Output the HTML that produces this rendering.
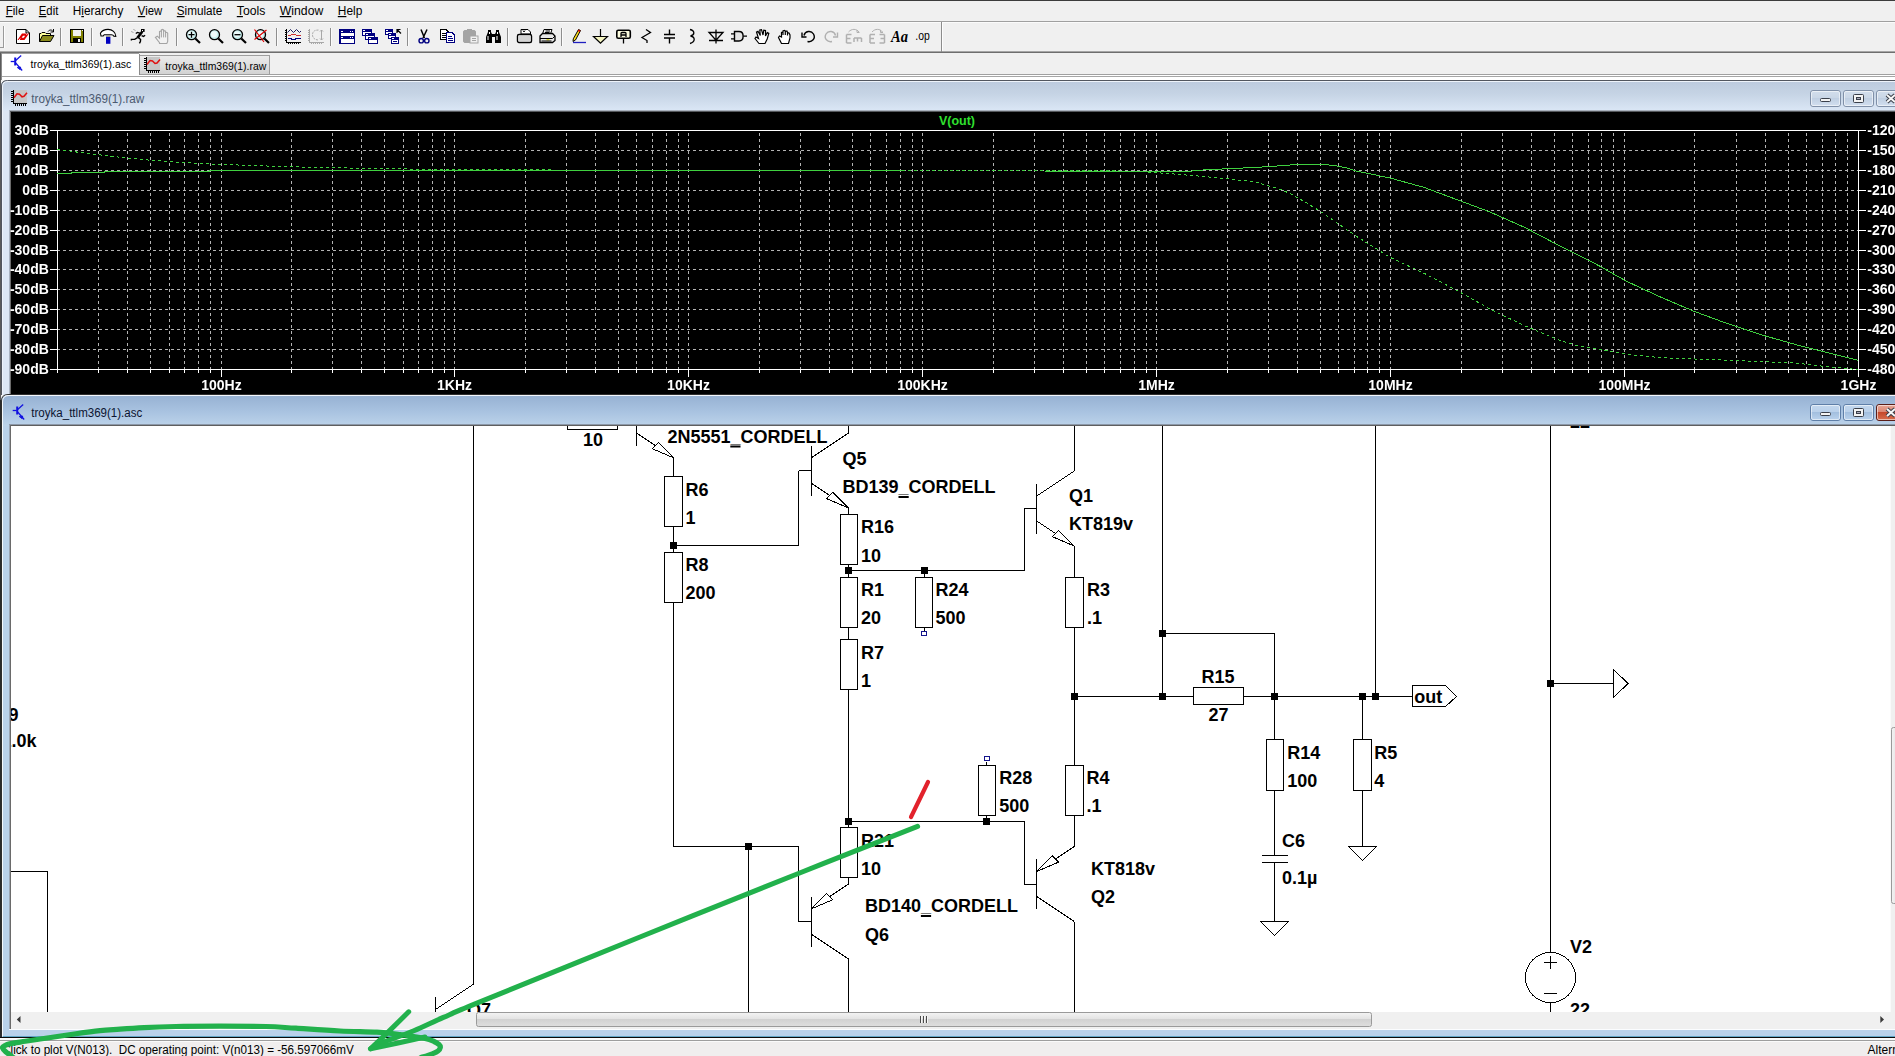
<!DOCTYPE html>
<html lang="en"><head><meta charset="utf-8"><title>LTspice IV - troyka_ttlm369(1).asc</title>
<style>
html,body{margin:0;padding:0;background:#f0f0f0;overflow:hidden}
svg{display:block;font-family:"Liberation Sans", Arial, sans-serif}
text{white-space:pre}
</style></head><body>
<svg width="1895" height="1056" viewBox="0 0 1895 1056">
<defs>
<linearGradient id="gInact" x1="0" y1="0" x2="0" y2="1"><stop offset="0" stop-color="#bccadd"/><stop offset="0.45" stop-color="#c6d4e5"/><stop offset="1" stop-color="#dbe7f6"/></linearGradient>
<linearGradient id="gAct" x1="0" y1="0" x2="0" y2="1"><stop offset="0" stop-color="#97b2d3"/><stop offset="0.5" stop-color="#a8c2e0"/><stop offset="1" stop-color="#bcd3ea"/></linearGradient>
<linearGradient id="gTab" x1="0" y1="0" x2="0" y2="1"><stop offset="0" stop-color="#ececec"/><stop offset="1" stop-color="#d2d2d2"/></linearGradient>
<linearGradient id="gThumb" x1="0" y1="0" x2="0" y2="1"><stop offset="0" stop-color="#f4f4f4"/><stop offset="0.5" stop-color="#e2e2e2"/><stop offset="0.5" stop-color="#d2d2d2"/><stop offset="1" stop-color="#dedede"/></linearGradient>
<linearGradient id="gThumbV" x1="0" y1="0" x2="1" y2="0"><stop offset="0" stop-color="#f4f4f4"/><stop offset="1" stop-color="#dcdcdc"/></linearGradient>
<linearGradient id="gBtnI" x1="0" y1="0" x2="0" y2="1"><stop offset="0" stop-color="#d3deec"/><stop offset="0.5" stop-color="#c9d6e6"/><stop offset="0.5" stop-color="#c0cfe2"/><stop offset="1" stop-color="#d3e0f0"/></linearGradient>
<linearGradient id="gBtnA" x1="0" y1="0" x2="0" y2="1"><stop offset="0" stop-color="#c4d8ef"/><stop offset="0.5" stop-color="#b9d0ea"/><stop offset="0.5" stop-color="#a3bfdf"/><stop offset="1" stop-color="#bcd4ee"/></linearGradient>
<linearGradient id="gBtnX" x1="0" y1="0" x2="0" y2="1"><stop offset="0" stop-color="#e9a99a"/><stop offset="0.5" stop-color="#d98470"/><stop offset="0.5" stop-color="#c5492c"/><stop offset="1" stop-color="#d8704f"/></linearGradient>
<clipPath id="clipSch"><rect x="11" y="426" width="1879" height="586"/></clipPath>
<clipPath id="clipPlot"><rect x="11" y="111" width="1884" height="284"/></clipPath>
</defs>

<rect x="0" y="0" width="1895" height="1056" fill="#f0f0f0" />
<rect x="0" y="0" width="1895" height="1" fill="#3c3c3c" />
<rect x="0" y="21" width="1895" height="1" fill="#a0a0a0" />
<rect x="0" y="22" width="1895" height="1" fill="#fbfbfb" />
<text x="5.8" y="15" font-size="12" fill="#000" textLength="18.5" lengthAdjust="spacingAndGlyphs"><tspan text-decoration="underline">F</tspan>ile</text>
<text x="38.8" y="15" font-size="12" fill="#000" textLength="19.5" lengthAdjust="spacingAndGlyphs"><tspan text-decoration="underline">E</tspan>dit</text>
<text x="72.8" y="15" font-size="12" fill="#000" textLength="50.5" lengthAdjust="spacingAndGlyphs">H<tspan text-decoration="underline">i</tspan>erarchy</text>
<text x="137.8" y="15" font-size="12" fill="#000" textLength="24.5" lengthAdjust="spacingAndGlyphs"><tspan text-decoration="underline">V</tspan>iew</text>
<text x="176.8" y="15" font-size="12" fill="#000" textLength="45.5" lengthAdjust="spacingAndGlyphs"><tspan text-decoration="underline">S</tspan>imulate</text>
<text x="236.8" y="15" font-size="12" fill="#000" textLength="28.5" lengthAdjust="spacingAndGlyphs"><tspan text-decoration="underline">T</tspan>ools</text>
<text x="279.8" y="15" font-size="12" fill="#000" textLength="43.5" lengthAdjust="spacingAndGlyphs"><tspan text-decoration="underline">W</tspan>indow</text>
<text x="337.8" y="15" font-size="12" fill="#000" textLength="24.5" lengthAdjust="spacingAndGlyphs"><tspan text-decoration="underline">H</tspan>elp</text>
<rect x="0" y="51" width="1895" height="1" fill="#a6a6a6" />
<rect x="0" y="52" width="1895" height="1" fill="#6e6e6e" />
<rect x="941" y="22" width="1" height="30" fill="#8c8c8c" />
<rect x="942" y="22" width="1" height="29" fill="#fdfdfd" />
<rect x="3" y="26" width="1" height="22" fill="#9a9a9a" />
<rect x="0" y="47" width="3" height="1" fill="#9a9a9a" />
<rect x="4" y="26" width="1" height="22" fill="#fdfdfd" />
<rect x="60" y="28" width="1" height="18" fill="#8e8e8e" />
<rect x="61" y="28" width="1" height="18" fill="#fbfbfb" />
<rect x="91" y="28" width="1" height="18" fill="#8e8e8e" />
<rect x="92" y="28" width="1" height="18" fill="#fbfbfb" />
<rect x="122" y="28" width="1" height="18" fill="#8e8e8e" />
<rect x="123" y="28" width="1" height="18" fill="#fbfbfb" />
<rect x="176" y="28" width="1" height="18" fill="#8e8e8e" />
<rect x="177" y="28" width="1" height="18" fill="#fbfbfb" />
<rect x="276" y="28" width="1" height="18" fill="#8e8e8e" />
<rect x="277" y="28" width="1" height="18" fill="#fbfbfb" />
<rect x="330" y="28" width="1" height="18" fill="#8e8e8e" />
<rect x="331" y="28" width="1" height="18" fill="#fbfbfb" />
<rect x="407" y="28" width="1" height="18" fill="#8e8e8e" />
<rect x="408" y="28" width="1" height="18" fill="#fbfbfb" />
<rect x="507" y="28" width="1" height="18" fill="#8e8e8e" />
<rect x="508" y="28" width="1" height="18" fill="#fbfbfb" />
<rect x="561" y="28" width="1" height="18" fill="#8e8e8e" />
<rect x="562" y="28" width="1" height="18" fill="#fbfbfb" />
<g transform="translate(16 29)"><path d="M0.5 0.5H10L13.5 4V14.5H0.5Z" fill="#fff" stroke="#000"/><path d="M10 0.5V4H13.5" fill="none" stroke="#000"/><path d="M1.5 11L6 4.5H13L8.5 11Z" fill="#e00000"/><path d="M5.6 8.8L7 6.8H9.2L7.8 8.8Z" fill="#fff"/><path d="M3.2 11L4.2 9.6M10.5 5.8L11.6 4.3" stroke="#fff" stroke-width="0.9"/></g>
<g transform="translate(39 29)"><path d="M0.5 12.5V4.5H2L3 3.5H6L7 4.5H11.5V6.5" fill="#ffff9a" stroke="#000"/><path d="M0.5 12.5L3.5 6.5H15L11.5 12.5Z" fill="#8a8a1c" stroke="#000"/><path d="M9 2.5C10.5 0.5 13 0.5 14 2.5M14.5 0V3H11.5" fill="none" stroke="#000"/></g>
<g transform="translate(70 29)" shape-rendering="crispEdges"><rect x="0.5" y="0.5" width="13" height="13" fill="#808000" stroke="#000"/><rect x="3" y="1" width="8" height="6" fill="#f0f0f0"/><rect x="3" y="9" width="8" height="5" fill="#000"/><rect x="8" y="10" width="2" height="3" fill="#f0f0f0"/><rect x="12" y="1" width="1" height="1" fill="#f0f0f0"/></g>
<g transform="translate(100 29)"><path d="M0.4 4.2C2 1.5 5 0.4 8 0.4C12.5 0.4 15.6 3.5 15.8 7.4L13.8 7.2C13.4 6 12.6 5.8 11.4 5.7L4.2 5.7L3.2 7L1 7Z" fill="#fff" stroke="#000" stroke-width="1.1"/><rect x="6" y="6.2" width="4.4" height="1.8" fill="#9a9a9a"/><rect x="6" y="8" width="4.4" height="6.8" fill="#0000c0"/></g>
<g transform="translate(130 29)"><rect x="11" y="0" width="3.6" height="2.9" fill="#000"/><rect x="12" y="1" width="1" height="1" fill="#fff"/><path d="M12.2 2.8L7.6 8.6" stroke="#000" stroke-width="2.6" fill="none"/><path d="M9.8 4.2L7.4 3.4L5.8 4.5M11.6 6.6L13.5 7.5L15.1 6.2M7.8 8.4L4.7 10.4H1.4V11.6M8.4 8.4L10.6 10.6L10.4 12.6L9.4 14.4" stroke="#000" stroke-width="1.4" fill="none"/><path d="M3.3 0.4L5.6 1.5M1.1 2.5L3.5 3.5" stroke="#a8a8a8" fill="none"/></g>
<g transform="translate(154 29)"><path d="M5.5 14.5H12.8L13.7 12.5V4.3L13 3.5L11.6 3.5V2.2L10.6 1.8L9.6 2V0.8L8.4 0.4L7.4 0.9V2.4L6.4 2L5.5 2.6V9.2L3.3 7.2L1.4 8.4L5.5 13.7Z" fill="#f2f2f2" stroke="#a4a4a4" stroke-width="1.1"/><path d="M7.4 2.4V8.4M9.6 2V8.4M11.6 3.5V8.4" stroke="#a4a4a4" fill="none"/></g>
<g transform="translate(185 29)"><circle cx="6.5" cy="5.7" r="5" fill="#c8f0f0" stroke="#000" stroke-width="1.3"/><circle cx="6" cy="5.2" r="3" fill="#fff" opacity="0.7"/><path d="M10.3 9.5L15 14" stroke="#000" stroke-width="2.2" fill="none"/><path d="M3.5 5.7H9.5M6.5 2.7V8.7" stroke="#000" stroke-width="1.3"/></g>
<g transform="translate(208 29)"><circle cx="6.5" cy="5.7" r="5" fill="#c8f0f0" stroke="#000" stroke-width="1.3"/><circle cx="6" cy="5.2" r="3" fill="#fff" opacity="0.7"/><path d="M10.3 9.5L15 14" stroke="#000" stroke-width="2.2" fill="none"/></g>
<g transform="translate(231 29)"><circle cx="6.5" cy="5.7" r="5" fill="#c8f0f0" stroke="#000" stroke-width="1.3"/><circle cx="6" cy="5.2" r="3" fill="#fff" opacity="0.7"/><path d="M10.3 9.5L15 14" stroke="#000" stroke-width="2.2" fill="none"/><path d="M3.5 5.7H9.5" stroke="#000" stroke-width="1.3"/></g>
<g transform="translate(254 29)"><circle cx="6.5" cy="5.7" r="5" fill="#c8f0f0" stroke="#000" stroke-width="1.3"/><circle cx="6" cy="5.2" r="3" fill="#fff" opacity="0.7"/><path d="M10.3 9.5L15 14" stroke="#000" stroke-width="2.2" fill="none"/><path d="M0.5 0.5L10 13M12.5 1L0.5 10.5" stroke="#e00000" stroke-width="1.2"/></g>
<g transform="translate(285 29)" shape-rendering="crispEdges"><path d="M1.5 0V13.5H16" fill="none" stroke="#000"/><path d="M0 1.5H1M0 3.5H1M0 5.5H1M0 7.5H1M0 9.5H1M0 11.5H1M3.5 14V15M5.5 14V15M7.5 14V15M9.5 14V15M11.5 14V15M13.5 14V15" stroke="#000"/><path d="M2.5 3.5L5.5 0.5L8.5 3.5L11.5 0.5L14.5 3.5L16 2" fill="none" stroke="#202060" shape-rendering="auto"/><path d="M2.5 6.5H5L7 5.5H10L12 6.5H16" fill="none" stroke="#d03030"/><path d="M2.5 9.5H6L7 10.5H10L11 9.5H16" fill="none" stroke="#000080" stroke-width="1.4"/></g>
<g transform="translate(308 29)" shape-rendering="crispEdges"><path d="M1.5 0V13.5H16" fill="none" stroke="#a8a8a8"/><path d="M0 1.5H1M0 3.5H1M0 5.5H1M0 7.5H1M0 9.5H1M0 11.5H1M3.5 14V15M5.5 14V15M7.5 14V15M9.5 14V15M11.5 14V15M13.5 14V15" stroke="#a8a8a8"/><path d="M10.5 1C5 1 4.5 4 4.5 6C4.5 9 7 11 10.5 11" fill="none" stroke="#a8a8a8" stroke-dasharray="2 1" shape-rendering="auto"/><path d="M13.5 1V11M12 2.5L13.5 1L15 2.5M12 9.5L13.5 11L15 9.5" fill="none" stroke="#a8a8a8" shape-rendering="auto"/></g>
<g transform="translate(339 29)" shape-rendering="crispEdges"><rect x="0.75" y="0.75" width="14.5" height="13.5" fill="#fff" stroke="#000080" stroke-width="1.5"/><rect x="1" y="1" width="14" height="3" fill="#000080"/><rect x="1" y="7" width="14" height="3" fill="#000080"/><rect x="2" y="2" width="2" height="1" fill="#fff"/><rect x="11" y="2" width="1" height="1" fill="#fff"/><rect x="13" y="2" width="1" height="1" fill="#fff"/><rect x="2" y="8" width="2" height="1" fill="#fff"/><rect x="11" y="8" width="1" height="1" fill="#fff"/><rect x="13" y="8" width="1" height="1" fill="#fff"/></g>
<g transform="translate(362 29)" shape-rendering="crispEdges"><rect x="0.5" y="0.5" width="9" height="6" fill="#fff" stroke="#000080"/><rect x="0" y="0" width="10" height="3" fill="#000080"/><rect x="1" y="1" width="2" height="1" fill="#fff"/><rect x="3.5" y="4.5" width="9" height="6" fill="#fff" stroke="#000080"/><rect x="3" y="4" width="10" height="3" fill="#000080"/><rect x="4" y="5" width="2" height="1" fill="#fff"/><rect x="6.5" y="8.5" width="9" height="6" fill="#fff" stroke="#000080"/><rect x="6" y="8" width="10" height="3" fill="#000080"/><rect x="7" y="9" width="2" height="1" fill="#fff"/></g>
<g transform="translate(385 29)" shape-rendering="crispEdges"><rect x="0.5" y="0.5" width="7" height="5" fill="#fff" stroke="#000080"/><rect x="0" y="0" width="8" height="3" fill="#000080"/><rect x="1" y="1" width="2" height="1" fill="#fff"/><rect x="3.5" y="4.5" width="7" height="5" fill="#fff" stroke="#000080"/><rect x="3" y="4" width="8" height="3" fill="#000080"/><rect x="4" y="5" width="2" height="1" fill="#fff"/><rect x="6.5" y="8.5" width="7" height="6" fill="#fff" stroke="#000080"/><rect x="6" y="8" width="8" height="3" fill="#000080"/><rect x="7" y="9" width="2" height="1" fill="#fff"/><rect x="8" y="12" width="4" height="1" fill="#000080"/><path d="M12 4V0.5H15.5M12 0.5L16 4.5" fill="none" stroke="#000" stroke-width="1.2" shape-rendering="auto"/></g>
<g transform="translate(416 29)"><path d="M5 0.5L8.5 9M11 0.5L7 9" stroke="#000" stroke-width="1.5" fill="none"/><circle cx="5.2" cy="11.7" r="2.2" fill="none" stroke="#000080" stroke-width="1.4"/><circle cx="10.8" cy="11.7" r="2.2" fill="none" stroke="#000080" stroke-width="1.4"/></g>
<g transform="translate(440 29)" shape-rendering="crispEdges"><path d="M0.5 0.5H6L8.5 3V10.5H0.5Z" fill="#fff" stroke="#000" stroke-width="1.3"/><path d="M2 4.5H6M2 6.5H7M2 8.5H7" stroke="#000"/><path d="M6.5 3.5H12L14.5 6V13.5H6.5Z" fill="#fff" stroke="#000080" stroke-width="1.3"/><path d="M8 7.5H12M8 9.5H13M8 11.5H13" stroke="#000080"/></g>
<g transform="translate(463 29)"><rect x="0.5" y="1.5" width="12" height="12" rx="1.5" fill="#a4a4a4" stroke="#a4a4a4"/><rect x="4" y="0" width="5" height="3" fill="#a4a4a4"/><rect x="7" y="7" width="8" height="7" fill="#f0f0f0" stroke="#a4a4a4"/><path d="M9 9.5H13M9 11.5H13" stroke="#a4a4a4"/></g>
<g transform="translate(485.5 29)"><path d="M2.5 1H5.5V3L6.5 5H9.5L10.5 3V1H13.5V3L15.5 8V14H9.5V8H6.5V14H0.5V8L2.5 3Z" fill="#000"/><rect x="2" y="7" width="1" height="4" fill="#fff"/><rect x="11" y="7" width="1" height="4" fill="#fff"/><rect x="3.5" y="3" width="1" height="2" fill="#fff"/><rect x="11.5" y="3" width="1" height="2" fill="#fff"/></g>
<g transform="translate(517 29)"><path d="M4 0.5H11L13.5 3V5H4Z" fill="#fff" stroke="#000"/><rect x="0.5" y="5.5" width="14" height="8" rx="1.5" fill="#fff" stroke="#000" stroke-width="1.4"/><rect x="2" y="7" width="11" height="5" fill="#d4d4d4"/><path d="M6 1.5L7 3L8 1.5" fill="none" stroke="#000"/></g>
<g transform="translate(539.5 29)"><path d="M4.5 0.5H12.5L11 5H3Z" fill="#fff" stroke="#000"/><path d="M6 2H10.5M5.5 3.5H10" stroke="#000"/><path d="M0.5 7L3 4.5H13L15.5 7V11.5L13 13.5H0.5Z" fill="#e8e8e8" stroke="#000" stroke-width="1.3"/><path d="M0.5 9.5H13L15.5 7" fill="none" stroke="#000"/><rect x="7" y="10" width="3" height="1.5" fill="#d8d830"/><path d="M2 12H12" stroke="#000"/></g>
<g transform="translate(571 29)"><path d="M7.5 0.5L9.5 1.5L4.5 11L2 12.5L2.3 9.8Z" fill="#ffe020" stroke="#000"/><path d="M7.5 0.5L9.5 1.5L8.8 3L6.7 2Z" fill="#d00000"/><path d="M2 13.5H15" stroke="#2020c0" stroke-width="1.3"/></g>
<g transform="translate(593 29)"><path d="M7.5 0V7.5" stroke="#000" stroke-width="1.2"/><path d="M0.5 7.5H14.5L7.5 14.2Z" fill="#f4f4c0" stroke="#000" stroke-width="1.2"/></g>
<g transform="translate(616 29)"><rect x="0.8" y="1.3" width="13.5" height="8" rx="1.5" fill="#fdfde0" stroke="#000" stroke-width="1.6"/><path d="M7.5 9.5V14.5" stroke="#000" stroke-width="1.3"/><path d="M5 8V4.5Q5 3.5 6 3.5H9Q10 3.5 10 4.5V8M5 6H10" fill="none" stroke="#000" stroke-width="1.3"/></g>
<g transform="translate(641 29)"><path d="M5 0.5L9.5 3.5L1 8.5L6 11.5L6 14" fill="none" stroke="#000" stroke-width="1.3"/></g>
<g transform="translate(663.5 29)"><path d="M6 0.5V5.5M0.5 5.5H11.5M0.5 9H11.5M6 9V14.5" fill="none" stroke="#000" stroke-width="1.4"/></g>
<g transform="translate(688 29)"><path d="M2 0.5C7 1.5 7 6 2.5 7C7.5 8 7.5 13 2 14.5" fill="none" stroke="#000" stroke-width="1.3"/></g>
<g transform="translate(708.5 29)"><path d="M7.5 0.5V14.5M0.5 3.5H14.5L7.5 11.2ZM0.5 11.5H14.5" fill="none" stroke="#000" stroke-width="1.3"/></g>
<g transform="translate(731 29)"><path d="M3.5 2.5H8C13.5 2.5 13.5 12 8 12H3.5Z" fill="#e4e4e4" stroke="#000" stroke-width="1.4"/><path d="M0 4.8H3.5M0 9.8H3.5M12.3 7.2H16" stroke="#000" stroke-width="1.3"/></g>
<g transform="translate(754 29)"><path d="M5 14.5L1 9.5L2 8L4.5 9.5L2.5 3L4 2.2L6.3 6.5L5.8 1L7.5 0.6L9 6L9.8 1.2L11.5 1.5L11.5 7L13.3 3.5L14.8 4.3L13.2 10L11 14.5Z" fill="#fff" stroke="#000" stroke-width="1.2"/></g>
<g transform="translate(777.5 29)"><path d="M4 14.5L1 8.5L2 7L4 8V3.5L5.5 3V2L7 1.5L8 2.2L9.5 2.2L10 3.5L11.5 4L12.5 6V9L11 14.5Z M5.5 3V6M7.8 2.2V6M10 3.5V6.5" fill="#fff" stroke="#000" stroke-width="1.2"/></g>
<g transform="translate(801 29)"><path d="M3 6.5C4 2 10 1 12.5 5C15 9.5 11 13.5 6.5 12.5" fill="none" stroke="#000" stroke-width="1.4"/><path d="M1 3.5V8H5.5" fill="none" stroke="#000" stroke-width="1.4"/></g>
<g transform="translate(823.5 29)"><path d="M12 6.5C11 2 5 1 2.5 5C0 9.5 4 13.5 8.5 12.5" fill="none" stroke="#b0b0b0" stroke-width="1.4"/><path d="M14 3.5V8H9.5" fill="none" stroke="#b0b0b0" stroke-width="1.4"/></g>
<g transform="translate(845.5 29)"><path d="M1 5.5H6M1 5.5V14M1 9.5H5M1 14H6M8.5 9V13M8.5 9H16M12 9V12.5M16 9V13" fill="none" stroke="#b0b0b0" stroke-width="1.5"/><path d="M3 3C6 -0.5 11 -0.5 13.5 3M11.5 1V3.5H14" fill="none" stroke="#b0b0b0"/></g>
<g transform="translate(869 29)"><path d="M1 5.5H6M1 5.5V14M1 9.5H5M1 14H6M15.5 5.5H10.5M15.5 5.5V14M15.5 9.5H11.5M15.5 14H10.5" fill="none" stroke="#b0b0b0" stroke-width="1.5"/><path d="M3 3C6 -0.5 11 -0.5 13.5 3M11.5 1V3.5H14" fill="none" stroke="#b0b0b0"/></g>
<text x="891" y="41.5" font-family='"Liberation Serif", serif' font-size="16" font-style="italic" font-weight="bold" fill="#000" textLength="17" lengthAdjust="spacingAndGlyphs">Aa</text>
<text x="915.3" y="40" font-size="13" fill="#000" textLength="14.5" lengthAdjust="spacingAndGlyphs">.op</text>
<rect x="0" y="74" width="1895" height="1" fill="#a0a0a0" />
<rect x="0" y="75" width="1895" height="1" fill="#ffffff" />
<rect x="0" y="76" width="1895" height="1" fill="#a6a6a6" />
<rect x="0" y="77" width="1895" height="3" fill="#ffffff" />
<rect x="139.5" y="55.5" width="130" height="19" fill="url(#gTab)" stroke="#9e9e9e" stroke-width="1"/>
<rect x="2" y="54" width="137" height="22" fill="#ffffff" />
<rect x="1" y="54" width="1" height="21" fill="#a0a0a0" />
<rect x="2" y="53" width="137" height="1" fill="#a0a0a0" />
<rect x="139" y="54" width="1" height="21" fill="#8a8a8a" />
<text x="30.6" y="67.6" font-size="11" fill="#000" font-weight="normal" textLength="100.7" lengthAdjust="spacingAndGlyphs" >troyka_ttlm369(1).asc</text>
<text x="165.3" y="69.6" font-size="11" fill="#000" font-weight="normal" textLength="101" lengthAdjust="spacingAndGlyphs" >troyka_ttlm369(1).raw</text>
<rect x="0" y="53" width="1" height="1003" fill="#5a5a5a" />
<rect x="1" y="53" width="1" height="27" fill="#8a8a8a" />
<g id="plotwin">
<path d="M1 111 L1 86 Q1 80.5 7 80.5 L1895 80.5 L1895 111 Z" fill="url(#gInact)"/>
<path d="M1.5 395 L1.5 86 Q1.5 80.5 7.5 80.5 L1895 80.5" fill="none" stroke="#52565f" stroke-width="1"/>
<path d="M2.5 395 L2.5 87 Q2.5 81.5 8 81.5 L1895 81.5" fill="none" stroke="#eef3fa" stroke-width="1"/>
<rect x="3" y="111" width="6" height="284" fill="#dde7f4" />
<rect x="9" y="110" width="1" height="285" fill="#aab3c0" />
<rect x="10" y="110" width="1" height="285" fill="#6c6c6c" />
<rect x="9" y="110" width="1886" height="1" fill="#a9b1bd" />
<rect x="10" y="111" width="1885" height="1" fill="#55585c" />
<rect x="11" y="112" width="1884" height="283" fill="#000" />
<text x="31.3" y="102.7" font-size="12" fill="#4c5a70" font-weight="normal" textLength="113" lengthAdjust="spacingAndGlyphs" >troyka_ttlm369(1).raw</text>
</g>
<g shape-rendering="crispEdges" clip-path="url(#clipPlot)">
<line x1="57" y1="150.5" x2="1858" y2="150.5" stroke="#b4b4b4" stroke-width="1" stroke-dasharray="3 3"/>
<line x1="57" y1="170.5" x2="1858" y2="170.5" stroke="#b4b4b4" stroke-width="1" stroke-dasharray="3 3"/>
<line x1="57" y1="190.5" x2="1858" y2="190.5" stroke="#b4b4b4" stroke-width="1" stroke-dasharray="3 3"/>
<line x1="57" y1="210.5" x2="1858" y2="210.5" stroke="#b4b4b4" stroke-width="1" stroke-dasharray="3 3"/>
<line x1="57" y1="230.5" x2="1858" y2="230.5" stroke="#b4b4b4" stroke-width="1" stroke-dasharray="3 3"/>
<line x1="57" y1="250.5" x2="1858" y2="250.5" stroke="#b4b4b4" stroke-width="1" stroke-dasharray="3 3"/>
<line x1="57" y1="269.5" x2="1858" y2="269.5" stroke="#b4b4b4" stroke-width="1" stroke-dasharray="3 3"/>
<line x1="57" y1="289.5" x2="1858" y2="289.5" stroke="#b4b4b4" stroke-width="1" stroke-dasharray="3 3"/>
<line x1="57" y1="309.5" x2="1858" y2="309.5" stroke="#b4b4b4" stroke-width="1" stroke-dasharray="3 3"/>
<line x1="57" y1="329.5" x2="1858" y2="329.5" stroke="#b4b4b4" stroke-width="1" stroke-dasharray="3 3"/>
<line x1="57" y1="349.5" x2="1858" y2="349.5" stroke="#b4b4b4" stroke-width="1" stroke-dasharray="3 3"/>
<line x1="98.5" y1="133" x2="98.5" y2="369" stroke="#b4b4b4" stroke-width="1" stroke-dasharray="3 3"/>
<line x1="127.5" y1="133" x2="127.5" y2="369" stroke="#b4b4b4" stroke-width="1" stroke-dasharray="3 3"/>
<line x1="150.5" y1="133" x2="150.5" y2="369" stroke="#b4b4b4" stroke-width="1" stroke-dasharray="3 3"/>
<line x1="169.5" y1="133" x2="169.5" y2="369" stroke="#b4b4b4" stroke-width="1" stroke-dasharray="3 3"/>
<line x1="184.5" y1="133" x2="184.5" y2="369" stroke="#b4b4b4" stroke-width="1" stroke-dasharray="3 3"/>
<line x1="198.5" y1="133" x2="198.5" y2="369" stroke="#b4b4b4" stroke-width="1" stroke-dasharray="3 3"/>
<line x1="210.5" y1="133" x2="210.5" y2="369" stroke="#b4b4b4" stroke-width="1" stroke-dasharray="3 3"/>
<line x1="221.5" y1="133" x2="221.5" y2="369" stroke="#b4b4b4" stroke-width="1" stroke-dasharray="3 3"/>
<line x1="291.5" y1="133" x2="291.5" y2="369" stroke="#b4b4b4" stroke-width="1" stroke-dasharray="3 3"/>
<line x1="332.5" y1="133" x2="332.5" y2="369" stroke="#b4b4b4" stroke-width="1" stroke-dasharray="3 3"/>
<line x1="361.5" y1="133" x2="361.5" y2="369" stroke="#b4b4b4" stroke-width="1" stroke-dasharray="3 3"/>
<line x1="384.5" y1="133" x2="384.5" y2="369" stroke="#b4b4b4" stroke-width="1" stroke-dasharray="3 3"/>
<line x1="403.5" y1="133" x2="403.5" y2="369" stroke="#b4b4b4" stroke-width="1" stroke-dasharray="3 3"/>
<line x1="418.5" y1="133" x2="418.5" y2="369" stroke="#b4b4b4" stroke-width="1" stroke-dasharray="3 3"/>
<line x1="432.5" y1="133" x2="432.5" y2="369" stroke="#b4b4b4" stroke-width="1" stroke-dasharray="3 3"/>
<line x1="444.5" y1="133" x2="444.5" y2="369" stroke="#b4b4b4" stroke-width="1" stroke-dasharray="3 3"/>
<line x1="454.5" y1="133" x2="454.5" y2="369" stroke="#b4b4b4" stroke-width="1" stroke-dasharray="3 3"/>
<line x1="525.5" y1="133" x2="525.5" y2="369" stroke="#b4b4b4" stroke-width="1" stroke-dasharray="3 3"/>
<line x1="566.5" y1="133" x2="566.5" y2="369" stroke="#b4b4b4" stroke-width="1" stroke-dasharray="3 3"/>
<line x1="595.5" y1="133" x2="595.5" y2="369" stroke="#b4b4b4" stroke-width="1" stroke-dasharray="3 3"/>
<line x1="618.5" y1="133" x2="618.5" y2="369" stroke="#b4b4b4" stroke-width="1" stroke-dasharray="3 3"/>
<line x1="636.5" y1="133" x2="636.5" y2="369" stroke="#b4b4b4" stroke-width="1" stroke-dasharray="3 3"/>
<line x1="652.5" y1="133" x2="652.5" y2="369" stroke="#b4b4b4" stroke-width="1" stroke-dasharray="3 3"/>
<line x1="666.5" y1="133" x2="666.5" y2="369" stroke="#b4b4b4" stroke-width="1" stroke-dasharray="3 3"/>
<line x1="678.5" y1="133" x2="678.5" y2="369" stroke="#b4b4b4" stroke-width="1" stroke-dasharray="3 3"/>
<line x1="688.5" y1="133" x2="688.5" y2="369" stroke="#b4b4b4" stroke-width="1" stroke-dasharray="3 3"/>
<line x1="759.5" y1="133" x2="759.5" y2="369" stroke="#b4b4b4" stroke-width="1" stroke-dasharray="3 3"/>
<line x1="800.5" y1="133" x2="800.5" y2="369" stroke="#b4b4b4" stroke-width="1" stroke-dasharray="3 3"/>
<line x1="829.5" y1="133" x2="829.5" y2="369" stroke="#b4b4b4" stroke-width="1" stroke-dasharray="3 3"/>
<line x1="852.5" y1="133" x2="852.5" y2="369" stroke="#b4b4b4" stroke-width="1" stroke-dasharray="3 3"/>
<line x1="870.5" y1="133" x2="870.5" y2="369" stroke="#b4b4b4" stroke-width="1" stroke-dasharray="3 3"/>
<line x1="886.5" y1="133" x2="886.5" y2="369" stroke="#b4b4b4" stroke-width="1" stroke-dasharray="3 3"/>
<line x1="900.5" y1="133" x2="900.5" y2="369" stroke="#b4b4b4" stroke-width="1" stroke-dasharray="3 3"/>
<line x1="912.5" y1="133" x2="912.5" y2="369" stroke="#b4b4b4" stroke-width="1" stroke-dasharray="3 3"/>
<line x1="922.5" y1="133" x2="922.5" y2="369" stroke="#b4b4b4" stroke-width="1" stroke-dasharray="3 3"/>
<line x1="993.5" y1="133" x2="993.5" y2="369" stroke="#b4b4b4" stroke-width="1" stroke-dasharray="3 3"/>
<line x1="1034.5" y1="133" x2="1034.5" y2="369" stroke="#b4b4b4" stroke-width="1" stroke-dasharray="3 3"/>
<line x1="1063.5" y1="133" x2="1063.5" y2="369" stroke="#b4b4b4" stroke-width="1" stroke-dasharray="3 3"/>
<line x1="1086.5" y1="133" x2="1086.5" y2="369" stroke="#b4b4b4" stroke-width="1" stroke-dasharray="3 3"/>
<line x1="1104.5" y1="133" x2="1104.5" y2="369" stroke="#b4b4b4" stroke-width="1" stroke-dasharray="3 3"/>
<line x1="1120.5" y1="133" x2="1120.5" y2="369" stroke="#b4b4b4" stroke-width="1" stroke-dasharray="3 3"/>
<line x1="1134.5" y1="133" x2="1134.5" y2="369" stroke="#b4b4b4" stroke-width="1" stroke-dasharray="3 3"/>
<line x1="1146.5" y1="133" x2="1146.5" y2="369" stroke="#b4b4b4" stroke-width="1" stroke-dasharray="3 3"/>
<line x1="1156.5" y1="133" x2="1156.5" y2="369" stroke="#b4b4b4" stroke-width="1" stroke-dasharray="3 3"/>
<line x1="1227.5" y1="133" x2="1227.5" y2="369" stroke="#b4b4b4" stroke-width="1" stroke-dasharray="3 3"/>
<line x1="1268.5" y1="133" x2="1268.5" y2="369" stroke="#b4b4b4" stroke-width="1" stroke-dasharray="3 3"/>
<line x1="1297.5" y1="133" x2="1297.5" y2="369" stroke="#b4b4b4" stroke-width="1" stroke-dasharray="3 3"/>
<line x1="1320.5" y1="133" x2="1320.5" y2="369" stroke="#b4b4b4" stroke-width="1" stroke-dasharray="3 3"/>
<line x1="1338.5" y1="133" x2="1338.5" y2="369" stroke="#b4b4b4" stroke-width="1" stroke-dasharray="3 3"/>
<line x1="1354.5" y1="133" x2="1354.5" y2="369" stroke="#b4b4b4" stroke-width="1" stroke-dasharray="3 3"/>
<line x1="1367.5" y1="133" x2="1367.5" y2="369" stroke="#b4b4b4" stroke-width="1" stroke-dasharray="3 3"/>
<line x1="1379.5" y1="133" x2="1379.5" y2="369" stroke="#b4b4b4" stroke-width="1" stroke-dasharray="3 3"/>
<line x1="1390.5" y1="133" x2="1390.5" y2="369" stroke="#b4b4b4" stroke-width="1" stroke-dasharray="3 3"/>
<line x1="1461.5" y1="133" x2="1461.5" y2="369" stroke="#b4b4b4" stroke-width="1" stroke-dasharray="3 3"/>
<line x1="1502.5" y1="133" x2="1502.5" y2="369" stroke="#b4b4b4" stroke-width="1" stroke-dasharray="3 3"/>
<line x1="1531.5" y1="133" x2="1531.5" y2="369" stroke="#b4b4b4" stroke-width="1" stroke-dasharray="3 3"/>
<line x1="1554.5" y1="133" x2="1554.5" y2="369" stroke="#b4b4b4" stroke-width="1" stroke-dasharray="3 3"/>
<line x1="1572.5" y1="133" x2="1572.5" y2="369" stroke="#b4b4b4" stroke-width="1" stroke-dasharray="3 3"/>
<line x1="1588.5" y1="133" x2="1588.5" y2="369" stroke="#b4b4b4" stroke-width="1" stroke-dasharray="3 3"/>
<line x1="1601.5" y1="133" x2="1601.5" y2="369" stroke="#b4b4b4" stroke-width="1" stroke-dasharray="3 3"/>
<line x1="1613.5" y1="133" x2="1613.5" y2="369" stroke="#b4b4b4" stroke-width="1" stroke-dasharray="3 3"/>
<line x1="1624.5" y1="133" x2="1624.5" y2="369" stroke="#b4b4b4" stroke-width="1" stroke-dasharray="3 3"/>
<line x1="1694.5" y1="133" x2="1694.5" y2="369" stroke="#b4b4b4" stroke-width="1" stroke-dasharray="3 3"/>
<line x1="1736.5" y1="133" x2="1736.5" y2="369" stroke="#b4b4b4" stroke-width="1" stroke-dasharray="3 3"/>
<line x1="1765.5" y1="133" x2="1765.5" y2="369" stroke="#b4b4b4" stroke-width="1" stroke-dasharray="3 3"/>
<line x1="1788.5" y1="133" x2="1788.5" y2="369" stroke="#b4b4b4" stroke-width="1" stroke-dasharray="3 3"/>
<line x1="1806.5" y1="133" x2="1806.5" y2="369" stroke="#b4b4b4" stroke-width="1" stroke-dasharray="3 3"/>
<line x1="1822.5" y1="133" x2="1822.5" y2="369" stroke="#b4b4b4" stroke-width="1" stroke-dasharray="3 3"/>
<line x1="1835.5" y1="133" x2="1835.5" y2="369" stroke="#b4b4b4" stroke-width="1" stroke-dasharray="3 3"/>
<line x1="1847.5" y1="133" x2="1847.5" y2="369" stroke="#b4b4b4" stroke-width="1" stroke-dasharray="3 3"/>
<rect x="57" y="130" width="1" height="240" fill="#ffffff" />
<rect x="1858" y="130" width="1" height="240" fill="#ffffff" />
<rect x="57" y="130" width="1802" height="1" fill="#ffffff" />
<rect x="57" y="369" width="1802" height="1" fill="#ffffff" />
<rect x="50" y="130" width="7" height="1" fill="#ffffff" />
<rect x="1859" y="130" width="7" height="1" fill="#ffffff" />
<rect x="50" y="150" width="7" height="1" fill="#ffffff" />
<rect x="1859" y="150" width="7" height="1" fill="#ffffff" />
<rect x="50" y="170" width="7" height="1" fill="#ffffff" />
<rect x="1859" y="170" width="7" height="1" fill="#ffffff" />
<rect x="50" y="190" width="7" height="1" fill="#ffffff" />
<rect x="1859" y="190" width="7" height="1" fill="#ffffff" />
<rect x="50" y="210" width="7" height="1" fill="#ffffff" />
<rect x="1859" y="210" width="7" height="1" fill="#ffffff" />
<rect x="50" y="230" width="7" height="1" fill="#ffffff" />
<rect x="1859" y="230" width="7" height="1" fill="#ffffff" />
<rect x="50" y="250" width="7" height="1" fill="#ffffff" />
<rect x="1859" y="250" width="7" height="1" fill="#ffffff" />
<rect x="50" y="269" width="7" height="1" fill="#ffffff" />
<rect x="1859" y="269" width="7" height="1" fill="#ffffff" />
<rect x="50" y="289" width="7" height="1" fill="#ffffff" />
<rect x="1859" y="289" width="7" height="1" fill="#ffffff" />
<rect x="50" y="309" width="7" height="1" fill="#ffffff" />
<rect x="1859" y="309" width="7" height="1" fill="#ffffff" />
<rect x="50" y="329" width="7" height="1" fill="#ffffff" />
<rect x="1859" y="329" width="7" height="1" fill="#ffffff" />
<rect x="50" y="349" width="7" height="1" fill="#ffffff" />
<rect x="1859" y="349" width="7" height="1" fill="#ffffff" />
<rect x="50" y="369" width="7" height="1" fill="#ffffff" />
<rect x="1859" y="369" width="7" height="1" fill="#ffffff" />
<rect x="98" y="370" width="1" height="3" fill="#ffffff" />
<rect x="127" y="370" width="1" height="3" fill="#ffffff" />
<rect x="150" y="370" width="1" height="3" fill="#ffffff" />
<rect x="169" y="370" width="1" height="3" fill="#ffffff" />
<rect x="184" y="370" width="1" height="3" fill="#ffffff" />
<rect x="198" y="370" width="1" height="3" fill="#ffffff" />
<rect x="210" y="370" width="1" height="3" fill="#ffffff" />
<rect x="221" y="370" width="1" height="7" fill="#ffffff" />
<rect x="291" y="370" width="1" height="3" fill="#ffffff" />
<rect x="332" y="370" width="1" height="3" fill="#ffffff" />
<rect x="361" y="370" width="1" height="3" fill="#ffffff" />
<rect x="384" y="370" width="1" height="3" fill="#ffffff" />
<rect x="403" y="370" width="1" height="3" fill="#ffffff" />
<rect x="418" y="370" width="1" height="3" fill="#ffffff" />
<rect x="432" y="370" width="1" height="3" fill="#ffffff" />
<rect x="444" y="370" width="1" height="3" fill="#ffffff" />
<rect x="454" y="370" width="1" height="7" fill="#ffffff" />
<rect x="525" y="370" width="1" height="3" fill="#ffffff" />
<rect x="566" y="370" width="1" height="3" fill="#ffffff" />
<rect x="595" y="370" width="1" height="3" fill="#ffffff" />
<rect x="618" y="370" width="1" height="3" fill="#ffffff" />
<rect x="636" y="370" width="1" height="3" fill="#ffffff" />
<rect x="652" y="370" width="1" height="3" fill="#ffffff" />
<rect x="666" y="370" width="1" height="3" fill="#ffffff" />
<rect x="678" y="370" width="1" height="3" fill="#ffffff" />
<rect x="688" y="370" width="1" height="7" fill="#ffffff" />
<rect x="759" y="370" width="1" height="3" fill="#ffffff" />
<rect x="800" y="370" width="1" height="3" fill="#ffffff" />
<rect x="829" y="370" width="1" height="3" fill="#ffffff" />
<rect x="852" y="370" width="1" height="3" fill="#ffffff" />
<rect x="870" y="370" width="1" height="3" fill="#ffffff" />
<rect x="886" y="370" width="1" height="3" fill="#ffffff" />
<rect x="900" y="370" width="1" height="3" fill="#ffffff" />
<rect x="912" y="370" width="1" height="3" fill="#ffffff" />
<rect x="922" y="370" width="1" height="7" fill="#ffffff" />
<rect x="993" y="370" width="1" height="3" fill="#ffffff" />
<rect x="1034" y="370" width="1" height="3" fill="#ffffff" />
<rect x="1063" y="370" width="1" height="3" fill="#ffffff" />
<rect x="1086" y="370" width="1" height="3" fill="#ffffff" />
<rect x="1104" y="370" width="1" height="3" fill="#ffffff" />
<rect x="1120" y="370" width="1" height="3" fill="#ffffff" />
<rect x="1134" y="370" width="1" height="3" fill="#ffffff" />
<rect x="1146" y="370" width="1" height="3" fill="#ffffff" />
<rect x="1156" y="370" width="1" height="7" fill="#ffffff" />
<rect x="1227" y="370" width="1" height="3" fill="#ffffff" />
<rect x="1268" y="370" width="1" height="3" fill="#ffffff" />
<rect x="1297" y="370" width="1" height="3" fill="#ffffff" />
<rect x="1320" y="370" width="1" height="3" fill="#ffffff" />
<rect x="1338" y="370" width="1" height="3" fill="#ffffff" />
<rect x="1354" y="370" width="1" height="3" fill="#ffffff" />
<rect x="1367" y="370" width="1" height="3" fill="#ffffff" />
<rect x="1379" y="370" width="1" height="3" fill="#ffffff" />
<rect x="1390" y="370" width="1" height="7" fill="#ffffff" />
<rect x="1461" y="370" width="1" height="3" fill="#ffffff" />
<rect x="1502" y="370" width="1" height="3" fill="#ffffff" />
<rect x="1531" y="370" width="1" height="3" fill="#ffffff" />
<rect x="1554" y="370" width="1" height="3" fill="#ffffff" />
<rect x="1572" y="370" width="1" height="3" fill="#ffffff" />
<rect x="1588" y="370" width="1" height="3" fill="#ffffff" />
<rect x="1601" y="370" width="1" height="3" fill="#ffffff" />
<rect x="1613" y="370" width="1" height="3" fill="#ffffff" />
<rect x="1624" y="370" width="1" height="7" fill="#ffffff" />
<rect x="1694" y="370" width="1" height="3" fill="#ffffff" />
<rect x="1736" y="370" width="1" height="3" fill="#ffffff" />
<rect x="1765" y="370" width="1" height="3" fill="#ffffff" />
<rect x="1788" y="370" width="1" height="3" fill="#ffffff" />
<rect x="1806" y="370" width="1" height="3" fill="#ffffff" />
<rect x="1822" y="370" width="1" height="3" fill="#ffffff" />
<rect x="1835" y="370" width="1" height="3" fill="#ffffff" />
<rect x="1847" y="370" width="1" height="3" fill="#ffffff" />
<rect x="57" y="369" width="1" height="4" fill="#ffffff" />
<rect x="1858" y="369" width="1" height="8" fill="#ffffff" />
</g>
<g style="filter:grayscale(1)">
<text x="48.8" y="135" font-size="14" fill="#fff" font-weight="bold" text-anchor="end" >30dB</text>
<text x="48.8" y="155" font-size="14" fill="#fff" font-weight="bold" text-anchor="end" >20dB</text>
<text x="48.8" y="175" font-size="14" fill="#fff" font-weight="bold" text-anchor="end" >10dB</text>
<text x="48.8" y="195" font-size="14" fill="#fff" font-weight="bold" text-anchor="end" >0dB</text>
<text x="48.8" y="215" font-size="14" fill="#fff" font-weight="bold" text-anchor="end" >-10dB</text>
<text x="48.8" y="235" font-size="14" fill="#fff" font-weight="bold" text-anchor="end" >-20dB</text>
<text x="48.8" y="255" font-size="14" fill="#fff" font-weight="bold" text-anchor="end" >-30dB</text>
<text x="48.8" y="274" font-size="14" fill="#fff" font-weight="bold" text-anchor="end" >-40dB</text>
<text x="48.8" y="294" font-size="14" fill="#fff" font-weight="bold" text-anchor="end" >-50dB</text>
<text x="48.8" y="314" font-size="14" fill="#fff" font-weight="bold" text-anchor="end" >-60dB</text>
<text x="48.8" y="334" font-size="14" fill="#fff" font-weight="bold" text-anchor="end" >-70dB</text>
<text x="48.8" y="354" font-size="14" fill="#fff" font-weight="bold" text-anchor="end" >-80dB</text>
<text x="48.8" y="374" font-size="14" fill="#fff" font-weight="bold" text-anchor="end" >-90dB</text>
<text x="1867.3" y="135" font-size="14" fill="#fff" font-weight="bold" >-120°</text>
<text x="1867.3" y="155" font-size="14" fill="#fff" font-weight="bold" >-150°</text>
<text x="1867.3" y="175" font-size="14" fill="#fff" font-weight="bold" >-180°</text>
<text x="1867.3" y="195" font-size="14" fill="#fff" font-weight="bold" >-210°</text>
<text x="1867.3" y="215" font-size="14" fill="#fff" font-weight="bold" >-240°</text>
<text x="1867.3" y="235" font-size="14" fill="#fff" font-weight="bold" >-270°</text>
<text x="1867.3" y="255" font-size="14" fill="#fff" font-weight="bold" >-300°</text>
<text x="1867.3" y="274" font-size="14" fill="#fff" font-weight="bold" >-330°</text>
<text x="1867.3" y="294" font-size="14" fill="#fff" font-weight="bold" >-360°</text>
<text x="1867.3" y="314" font-size="14" fill="#fff" font-weight="bold" >-390°</text>
<text x="1867.3" y="334" font-size="14" fill="#fff" font-weight="bold" >-420°</text>
<text x="1867.3" y="354" font-size="14" fill="#fff" font-weight="bold" >-450°</text>
<text x="1867.3" y="374" font-size="14" fill="#fff" font-weight="bold" >-480°</text>
<text x="221.5" y="390" font-size="14" fill="#fff" font-weight="bold" text-anchor="middle" >100Hz</text>
<text x="454.5" y="390" font-size="14" fill="#fff" font-weight="bold" text-anchor="middle" >1KHz</text>
<text x="688.5" y="390" font-size="14" fill="#fff" font-weight="bold" text-anchor="middle" >10KHz</text>
<text x="922.5" y="390" font-size="14" fill="#fff" font-weight="bold" text-anchor="middle" >100KHz</text>
<text x="1156.5" y="390" font-size="14" fill="#fff" font-weight="bold" text-anchor="middle" >1MHz</text>
<text x="1390.5" y="390" font-size="14" fill="#fff" font-weight="bold" text-anchor="middle" >10MHz</text>
<text x="1624.5" y="390" font-size="14" fill="#fff" font-weight="bold" text-anchor="middle" >100MHz</text>
<text x="1858.5" y="390" font-size="14" fill="#fff" font-weight="bold" text-anchor="middle" >1GHz</text>
</g>
<text x="957" y="125" font-size="12.5" fill="#2fe02f" font-weight="bold" text-anchor="middle" >V(out)</text>
<g shape-rendering="crispEdges" fill="none" stroke="#3fd03f" stroke-width="1">
<polyline points="57,173.5 71,173.5 72,172.5 104,172.5 105,171.5 209,171.5 210,170.5 905,170.5"/>
<polyline points="1045,171.5 1190,171.5 1194,170.5 1213,169.5 1232,168.5 1254,167.5 1271,166.5 1283,165.5 1297,164.5 1325,164.5 1337,166 1347,168 1354,170.5 1390,178 1424,187.4 1458,200 1491,212.4 1525,227.6 1559,245.5 1593,262.4 1626,281 1660,296.8 1694,311.3 1728,323.8 1762,335 1795,344.4 1829,352.9 1858,360.3"/>
<polyline stroke-dasharray="3 3" points="57,149.2 80,152.5 101,155 125,157.8 152,160.4 186,162.7 220,164.4 290,166.8 338,167.8 422,169.2 507,169.8 600,170.2 1100,170.4 1147,171.9 1194,175.6 1228,178.8 1255,182 1278,188.5 1289,193 1305,202 1322,212.4 1356,236 1390,257.3 1424,273.2 1458,291.1 1491,309.6 1525,325.9 1559,340 1575,345 1593,348.5 1626,354.2 1660,357.6 1728,360.3 1795,363 1829,367 1858,369.5"/>
</g>
<rect x="1810.5" y="90.5" width="30" height="16" rx="2.5" fill="url(#gBtnI)" stroke="#8090a8"/>
<rect x="1811.5" y="91.5" width="28" height="14" rx="1.5" fill="none" stroke="#ffffff" stroke-opacity="0.55"/>
<rect x="1820.5" y="98.5" width="10" height="3" rx="1" fill="#f4f4f4" stroke="#3a3f4a"/>
<rect x="1843.5" y="90.5" width="30" height="16" rx="2.5" fill="url(#gBtnI)" stroke="#8090a8"/>
<rect x="1844.5" y="91.5" width="28" height="14" rx="1.5" fill="none" stroke="#ffffff" stroke-opacity="0.55"/>
<rect x="1853.5" y="94.5" width="10" height="8" rx="1" fill="#f4f4f4" stroke="#3a3f4a"/>
<rect x="1856.5" y="97.5" width="4" height="2" fill="#aab" stroke="#3a3f4a"/>
<rect x="1876.5" y="90.5" width="30" height="16" rx="2.5" fill="url(#gBtnI)" stroke="#8090a8"/>
<rect x="1877.5" y="91.5" width="28" height="14" rx="1.5" fill="none" stroke="#ffffff" stroke-opacity="0.55"/>
<path d="M1887 95 l8 7 M1895 95 l-8 7" stroke="#3a3f4a" stroke-width="4" fill="none"/>
<path d="M1887 95 l8 7 M1895 95 l-8 7" stroke="#f8f8f8" stroke-width="2" fill="none"/>
<g id="schwin">
<path d="M1 1037 L1 401 Q1 395.5 7 395.5 L1895 395.5 L1895 1037 Z" fill="#b9d1ea"/>
<path d="M2 426 L2 401 Q2 396 8 396 L1895 396 L1895 426 Z" fill="url(#gAct)"/>
<path d="M1.5 1037 L1.5 401 Q1.5 394.5 8 394.5 L1895 394.5" fill="none" stroke="#2e2e2e" stroke-width="1"/>
<path d="M2.5 1036 L2.5 402 Q2.5 395.5 9 395.5 L1895 395.5" fill="none" stroke="#f4f8fc" stroke-width="1"/>
<rect x="0" y="400" width="1" height="657" fill="#2a2a2a" />
<rect x="9" y="424" width="1886" height="1" fill="#8c98a8" />
<rect x="9" y="425" width="1886" height="1" fill="#5f5f5f" />
<rect x="9" y="425" width="1" height="604" fill="#9aa4b2" />
<rect x="10" y="425" width="1" height="604" fill="#6a6a6a" />
<rect x="11" y="426" width="1880" height="586" fill="#ffffff" />
<rect x="11" y="1012" width="1884" height="17" fill="#f0f0f0" />
<rect x="1891" y="426" width="4" height="586" fill="#f0f0f0" />
<rect x="1890" y="426" width="1" height="586" fill="#fafafa" />
<rect x="9" y="1029" width="1886" height="1" fill="#fbfdff" />
<rect x="3" y="1036" width="1892" height="1" fill="#62a6c6" />
<rect x="0" y="1037" width="1895" height="1" fill="#0a0a0a" />
<rect x="0" y="1038" width="1895" height="2" fill="#fbfbfb" />
<rect x="0" y="1040" width="1895" height="1" fill="#9e9e9e" />
<rect x="0" y="1041" width="1895" height="1" fill="#fafafa" />
<rect x="0" y="1042" width="1895" height="14" fill="#f0eeee" />
<rect x="476.5" y="1012.5" width="895" height="14" rx="2" fill="url(#gThumb)" stroke="#9a9a9a"/>
<rect x="920" y="1016" width="1" height="7" fill="#4a4a4a" />
<rect x="921" y="1016" width="1" height="7" fill="#f6f6f6" />
<rect x="923" y="1016" width="1" height="7" fill="#4a4a4a" />
<rect x="924" y="1016" width="1" height="7" fill="#f6f6f6" />
<rect x="926" y="1016" width="1" height="7" fill="#4a4a4a" />
<rect x="927" y="1016" width="1" height="7" fill="#f6f6f6" />
<path d="M20.5 1016 L16.8 1019.5 L20.5 1023 Z" fill="#3a3a3a"/>
<path d="M1880.3 1016 L1884 1019.5 L1880.3 1023 Z" fill="#3a3a3a"/>
<rect x="1891.5" y="727.5" width="8" height="176" rx="2" fill="url(#gThumbV)" stroke="#9a9a9a"/>
<text x="31.3" y="416.7" font-size="12" fill="#0c1430" font-weight="normal" textLength="111" lengthAdjust="spacingAndGlyphs" >troyka_ttlm369(1).asc</text>
</g>
<rect x="1810.5" y="404.5" width="30" height="16" rx="2.5" fill="url(#gBtnA)" stroke="#5f7fa8"/>
<rect x="1811.5" y="405.5" width="28" height="14" rx="1.5" fill="none" stroke="#ffffff" stroke-opacity="0.55"/>
<rect x="1820.5" y="412.5" width="10" height="3" rx="1" fill="#f4f4f4" stroke="#3a3f4a"/>
<rect x="1843.5" y="404.5" width="30" height="16" rx="2.5" fill="url(#gBtnA)" stroke="#5f7fa8"/>
<rect x="1844.5" y="405.5" width="28" height="14" rx="1.5" fill="none" stroke="#ffffff" stroke-opacity="0.55"/>
<rect x="1853.5" y="408.5" width="10" height="8" rx="1" fill="#f4f4f4" stroke="#3a3f4a"/>
<rect x="1856.5" y="411.5" width="4" height="2" fill="#aab" stroke="#3a3f4a"/>
<rect x="1876.5" y="404.5" width="30" height="16" rx="2.5" fill="url(#gBtnX)" stroke="#5a1f1a"/>
<rect x="1877.5" y="405.5" width="28" height="14" rx="1.5" fill="none" stroke="#ffffff" stroke-opacity="0.55"/>
<path d="M1887 409 l8 7 M1895 409 l-8 7" stroke="#3a3f4a" stroke-width="4" fill="none"/>
<path d="M1887 409 l8 7 M1895 409 l-8 7" stroke="#f8f8f8" stroke-width="2" fill="none"/>
<g transform="translate(10.7 55)" fill="none" stroke="#1010e0" shape-rendering="auto"><path d="M0 6.5H4" stroke-width="1.3"/><path d="M4.5 2.5V10.5" stroke-width="2"/><path d="M5 5.5L10.5 0.5" stroke-width="1.2"/><path d="M5 8L11.5 15.5" stroke-width="1.2"/><path d="M6.5 12.5L10 12L9.5 14.8Z" fill="#1010e0" stroke-width="0.8"/></g>
<g transform="translate(12.7 404)" fill="none" stroke="#1010e0" shape-rendering="auto"><path d="M0 6.5H4" stroke-width="1.3"/><path d="M4.5 2.5V10.5" stroke-width="2"/><path d="M5 5.5L10.5 0.5" stroke-width="1.2"/><path d="M5 8L11.5 15.5" stroke-width="1.2"/><path d="M6.5 12.5L10 12L9.5 14.8Z" fill="#1010e0" stroke-width="0.8"/></g>
<g transform="translate(144 57)" shape-rendering="crispEdges"><rect x="3" y="0" width="13" height="13" fill="#c6c6c6"/><path d="M2.5 0V13.5H16" fill="none" stroke="#000"/><path d="M0 1.5H2M0 3.5H2M0 5.5H2M0 7.5H2M0 9.5H2M0 11.5H2M4.5 14V16M6.5 14V16M8.5 14V16M10.5 14V16M12.5 14V16M14.5 14V16" stroke="#000"/><path d="M3 7.5L6 3.5L8.5 4L11 6.5L13 6L16 2.5" fill="none" stroke="#e01010" stroke-width="1.5" shape-rendering="auto"/></g>
<g transform="translate(11 90.3)" shape-rendering="crispEdges"><rect x="3" y="0" width="13" height="13" fill="#c6c6c6"/><path d="M2.5 0V13.5H16" fill="none" stroke="#000"/><path d="M0 1.5H2M0 3.5H2M0 5.5H2M0 7.5H2M0 9.5H2M0 11.5H2M4.5 14V16M6.5 14V16M8.5 14V16M10.5 14V16M12.5 14V16M14.5 14V16" stroke="#000"/><path d="M3 7.5L6 3.5L8.5 4L11 6.5L13 6L16 2.5" fill="none" stroke="#e01010" stroke-width="1.5" shape-rendering="auto"/></g>
<text x="2.2" y="1054.4" font-size="12" fill="#000" font-weight="normal" textLength="351.5" lengthAdjust="spacingAndGlyphs" >Click to plot V(N013).  DC operating point: V(n013) = -56.597066mV</text>
<text x="1867.6" y="1054.4" font-size="12" fill="#000" font-weight="normal" >Alternate</text>
<g clip-path="url(#clipSch)">
<g shape-rendering="crispEdges" stroke="#000" stroke-width="1" fill="none">
<path d="M624 420.5L636.5 420.5"/>
<path d="M636.5 395.5L636.5 445.5"/>
<path d="M636.5 408.0L674.0 383.0"/>
<path d="M636.5 433.0L674.0 458.0"/>
<path fill="#fff" d="M674.0 458.0L658.38 442.38L652.12 448.62Z"/>
<path d="M798.5 470.5L811.0 470.5"/>
<path d="M811.0 445.5L811.0 495.5"/>
<path d="M811.0 458.0L848.5 433.0"/>
<path d="M811.0 483.0L848.5 508.0"/>
<path fill="#fff" d="M848.5 508.0L832.88 492.38L826.62 498.62Z"/>
<path d="M1024.2 508.5L1036.7 508.5"/>
<path d="M1036.7 483.5L1036.7 533.5"/>
<path d="M1036.7 496.0L1074.2 471.0"/>
<path d="M1036.7 521.0L1074.2 546.0"/>
<path fill="#fff" d="M1074.2 546.0L1058.58 530.38L1052.33 536.62Z"/>
<path d="M423 1022L435.5 1022"/>
<path d="M435.5 997.0L435.5 1047.0"/>
<path d="M435.5 1009.5L473.0 984.5"/>
<path d="M435.5 1034.5L473.0 1059.5"/>
<path fill="#fff" d="M473.0 1059.5L457.38 1043.88L451.12 1050.12Z"/>
<path d="M798.5 921.5L811.0 921.5"/>
<path d="M811.0 896.5L811.0 946.5"/>
<path d="M811.0 909.0L848.5 884.0"/>
<path d="M811.0 934.0L848.5 959.0"/>
<path fill="#fff" d="M811.0 909.0L826.62 893.38L832.88 899.62Z"/>
<path d="M1024.2 884L1036.7 884"/>
<path d="M1036.7 859.0L1036.7 909.0"/>
<path d="M1036.7 871.5L1074.2 846.5"/>
<path d="M1036.7 896.5L1074.2 921.5"/>
<path fill="#fff" d="M1036.7 871.5L1052.33 855.88L1058.58 862.12Z"/>
<path d="M473.5 420L473.5 984.5"/>
<path d="M673.5 458L673.5 846.5"/>
<path d="M798.5 470.5L798.5 545.5"/>
<path d="M848.5 420L848.5 433"/>
<path d="M848.5 508L848.5 884"/>
<path d="M1024.5 508.5L1024.5 570.5"/>
<path d="M924.5 570.5L924.5 631"/>
<path d="M1074.5 420L1074.5 471"/>
<path d="M1074.5 546L1074.5 846.5"/>
<path d="M1162.5 420L1162.5 696.5"/>
<path d="M1274.5 633.5L1274.5 855.5"/>
<path d="M1274.5 862.5L1274.5 921.5"/>
<path d="M1362.5 696.5L1362.5 846.5"/>
<path d="M1375.5 420L1375.5 696.5"/>
<path d="M1550.5 420L1550.5 952.5"/>
<path d="M1550.5 1002L1550.5 1015"/>
<path d="M1024.5 821.5L1024.5 884"/>
<path d="M986.5 762L986.5 821.5"/>
<path d="M798.5 846.5L798.5 921.5"/>
<path d="M748.5 846.5L748.5 1015"/>
<path d="M848.5 959L848.5 1015"/>
<path d="M1074.5 921.5L1074.5 1015"/>
<path d="M47.5 871.5L47.5 1015"/>
<path d="M673.5 545.5L798.5 545.5"/>
<path d="M848.5 570.5L1024.5 570.5"/>
<path d="M1074.5 696.5L1412.5 696.5"/>
<path d="M1162.5 633.5L1274.5 633.5"/>
<path d="M1550.5 683.5L1613.5 683.5"/>
<path d="M848.5 821.5L1024.5 821.5"/>
<path d="M673.5 846.5L798.5 846.5"/>
<path d="M5 871.5L47.5 871.5"/>
<rect x="664.5" y="476.5" width="18" height="50" fill="#fff"/>
<rect x="664.5" y="552.5" width="18" height="50" fill="#fff"/>
<rect x="1065.5" y="577.5" width="18" height="50" fill="#fff"/>
<rect x="1065.5" y="765.5" width="18" height="50" fill="#fff"/>
<rect x="840.5" y="514.5" width="17" height="50" fill="#fff"/>
<rect x="840.5" y="577.5" width="17" height="50" fill="#fff"/>
<rect x="840.5" y="639.5" width="17" height="50" fill="#fff"/>
<rect x="840.5" y="827.5" width="17" height="50" fill="#fff"/>
<rect x="978.5" y="765.5" width="17" height="50" fill="#fff"/>
<rect x="915.5" y="577.5" width="17" height="50" fill="#fff"/>
<rect x="1266.5" y="739.5" width="17" height="51" fill="#fff"/>
<rect x="1353.5" y="739.5" width="18" height="51" fill="#fff"/>
<rect x="1193.5" y="687.5" width="50" height="17" fill="#fff"/>
<rect x="567.5" y="412.5" width="50" height="17" fill="#fff"/>
<path d="M1262 855.5L1288 855.5"/>
<path d="M1262 862.5L1288 862.5"/>
<path d="M1260.5 921.5L1288.5 921.5L1274.5 935.5Z"/>
<path d="M1348.5 846.5L1376.5 846.5L1362.5 860.5Z"/>
<path d="M1613.5 669.5L1613.5 697.5L1628 683.5Z"/>
<path d="M1412.5 685.5L1445.5 685.5L1456.5 696.5L1445.5 706.5L1412.5 706.5Z" fill="#fff"/>
<circle cx="1550.5" cy="977.5" r="25" fill="#fff"/>
<path d="M1544 962.5L1557 962.5"/>
<path d="M1550.5 956L1550.5 969"/>
<path d="M1544 993.5L1557 993.5"/>
<rect x="921.5" y="631.5" width="5" height="4" stroke="#14148c"/>
<rect x="984.5" y="756.5" width="5" height="4" stroke="#14148c"/>
</g>
<g fill="#000" shape-rendering="crispEdges">
<rect x="670.0" y="542.0" width="7" height="7" fill="#000" />
<rect x="845.0" y="567.0" width="7" height="7" fill="#000" />
<rect x="921.0" y="567.0" width="7" height="7" fill="#000" />
<rect x="1159.0" y="630.0" width="7" height="7" fill="#000" />
<rect x="1071.0" y="693.0" width="7" height="7" fill="#000" />
<rect x="1159.0" y="693.0" width="7" height="7" fill="#000" />
<rect x="1271.0" y="693.0" width="7" height="7" fill="#000" />
<rect x="1359.0" y="693.0" width="7" height="7" fill="#000" />
<rect x="1372.0" y="693.0" width="7" height="7" fill="#000" />
<rect x="1547.0" y="680.0" width="7" height="7" fill="#000" />
<rect x="845.0" y="818.0" width="7" height="7" fill="#000" />
<rect x="983.0" y="818.0" width="7" height="7" fill="#000" />
<rect x="745.0" y="843.0" width="7" height="7" fill="#000" />
</g>
<g font-size="16" font-weight="bold" fill="#000">
<text x="582.9" y="445.6" font-size="18" fill="#000" font-weight="bold" >10</text>
<text x="667.5" y="442.6" font-size="18" fill="#000" font-weight="bold" >2N5551_CORDELL</text>
<text x="842.5" y="465.1" font-size="18" fill="#000" font-weight="bold" >Q5</text>
<text x="842.5" y="493.3" font-size="18" fill="#000" font-weight="bold" >BD139_CORDELL</text>
<text x="685.5" y="496.1" font-size="18" fill="#000" font-weight="bold" >R6</text>
<text x="685.5" y="524.1" font-size="18" fill="#000" font-weight="bold" >1</text>
<text x="685.5" y="570.7" font-size="18" fill="#000" font-weight="bold" >R8</text>
<text x="685.5" y="598.7" font-size="18" fill="#000" font-weight="bold" >200</text>
<text x="860.9" y="533.3" font-size="18" fill="#000" font-weight="bold" >R16</text>
<text x="860.9" y="562.3" font-size="18" fill="#000" font-weight="bold" >10</text>
<text x="860.9" y="596.3" font-size="18" fill="#000" font-weight="bold" >R1</text>
<text x="860.9" y="624.1" font-size="18" fill="#000" font-weight="bold" >20</text>
<text x="860.9" y="659.0" font-size="18" fill="#000" font-weight="bold" >R7</text>
<text x="860.9" y="687.1" font-size="18" fill="#000" font-weight="bold" >1</text>
<text x="935.5" y="596.3" font-size="18" fill="#000" font-weight="bold" >R24</text>
<text x="935.5" y="624.1" font-size="18" fill="#000" font-weight="bold" >500</text>
<text x="1068.9" y="502.3" font-size="18" fill="#000" font-weight="bold" >Q1</text>
<text x="1068.9" y="530.1" font-size="18" fill="#000" font-weight="bold" >KT819v</text>
<text x="1086.9" y="596.3" font-size="18" fill="#000" font-weight="bold" >R3</text>
<text x="1086.9" y="624.1" font-size="18" fill="#000" font-weight="bold" >.1</text>
<text x="1201.5" y="682.7" font-size="18" fill="#000" font-weight="bold" >R15</text>
<text x="1208.5" y="721.1" font-size="18" fill="#000" font-weight="bold" >27</text>
<text x="1287.3" y="759.1" font-size="18" fill="#000" font-weight="bold" >R14</text>
<text x="1287.3" y="787.1" font-size="18" fill="#000" font-weight="bold" >100</text>
<text x="1374.3" y="759.1" font-size="18" fill="#000" font-weight="bold" >R5</text>
<text x="1374.3" y="787.1" font-size="18" fill="#000" font-weight="bold" >4</text>
<text x="1086.5" y="783.7" font-size="18" fill="#000" font-weight="bold" >R4</text>
<text x="1086.5" y="812.1" font-size="18" fill="#000" font-weight="bold" >.1</text>
<text x="999.3" y="784.1" font-size="18" fill="#000" font-weight="bold" >R28</text>
<text x="999.3" y="812.1" font-size="18" fill="#000" font-weight="bold" >500</text>
<text x="860.9" y="846.7" font-size="18" fill="#000" font-weight="bold" >R21</text>
<text x="860.9" y="874.7" font-size="18" fill="#000" font-weight="bold" >10</text>
<text x="864.9" y="912.3" font-size="18" fill="#000" font-weight="bold" >BD140_CORDELL</text>
<text x="864.9" y="940.7" font-size="18" fill="#000" font-weight="bold" >Q6</text>
<text x="1090.9" y="875.1" font-size="18" fill="#000" font-weight="bold" >KT818v</text>
<text x="1090.9" y="903.1" font-size="18" fill="#000" font-weight="bold" >Q2</text>
<text x="1281.9" y="846.7" font-size="18" fill="#000" font-weight="bold" >C6</text>
<text x="1281.9" y="883.7" font-size="18" fill="#000" font-weight="bold" >0.1µ</text>
<text x="1414.3" y="703.3" font-size="18" fill="#000" font-weight="bold" >out</text>
<text x="1569.9" y="953.3" font-size="18" fill="#000" font-weight="bold" >V2</text>
<text x="1569.9" y="1016.1" font-size="18" fill="#000" font-weight="bold" >22</text>
<text x="1569.9" y="427.7" font-size="18" fill="#000" font-weight="bold" >22</text>
<text x="-4.5" y="721.2" font-size="18" fill="#000" font-weight="bold" >R9</text>
<text x="1.6" y="747.2" font-size="18" fill="#000" font-weight="bold" >1.0k</text>
<text x="466.9" y="1015.7" font-size="18" fill="#000" font-weight="bold" >Q7</text>
</g>
<rect x="730.3" y="445.5" width="10.2" height="2" fill="#000" />
<rect x="898.5" y="496" width="10.2" height="2" fill="#000" />
<rect x="920.9" y="915" width="10.2" height="2" fill="#000" />
<path d="M928 782 L911 817" stroke="#e2222c" stroke-width="4.2" stroke-linecap="round" fill="none"/>
</g>
<g fill="none" stroke="#22b14c" stroke-width="5" stroke-linecap="round" stroke-linejoin="round">
<path d="M917.6 826.4 C897.8 834.2 845.3 854.8 799 873.2 C752.7 891.6 693.2 915.5 640 937 C586.8 958.5 512.8 988.5 480 1001.9 C447.2 1015.3 454.4 1012.6 443.4 1017.4 C432.4 1022.2 424.2 1026.4 413.9 1030.7 C403.6 1035.0 388.6 1040.0 381.4 1043 C374.2 1046.0 372.3 1047.8 370.5 1048.8"/>
<path d="M408.7 1011.8 L385.8 1034.4 L370.5 1048.8 L398 1043 L425 1037"/>
<path stroke-width="5.2" d="M14 1058 C12.7 1057.0 7.9 1053.7 6 1052 C4.1 1050.3 2.7 1048.8 2.5 1047.7 C2.3 1046.6 3.8 1046.1 5 1045.5 C6.2 1044.9 6.1 1044.6 9.5 1043.9 C12.9 1043.2 18.4 1042.4 25.3 1041.3 C32.2 1040.2 42.2 1038.8 50.7 1037.5 C59.2 1036.2 67.8 1034.9 76 1033.7 C84.2 1032.5 92.7 1031.3 100 1030.6 C107.3 1029.8 112.7 1029.7 120 1029.2 C127.3 1028.7 134.7 1028.2 144 1027.7 C153.3 1027.2 163.3 1026.8 176 1026.5 C188.7 1026.2 205.0 1026.2 220 1026.2 C235.0 1026.2 253.3 1026.2 266 1026.5 C278.7 1026.8 283.7 1027.5 296 1028.2 C308.3 1029.0 326.5 1030.3 340 1031 C353.5 1031.7 367.0 1031.6 377 1032.2 C387.0 1032.8 392.0 1033.5 400 1034.5 C408.0 1035.5 419.3 1037.3 425 1038.5 C430.7 1039.7 431.7 1040.5 434 1041.5 C436.3 1042.5 437.9 1043.5 439 1044.5 C440.1 1045.5 440.5 1046.4 440.3 1047.5 C440.1 1048.6 439.3 1050.0 438 1051 C436.7 1052.0 435.1 1052.7 432.3 1053.8 C429.5 1054.9 422.9 1056.9 421 1057.5"/>
</g>
</svg></body></html>
